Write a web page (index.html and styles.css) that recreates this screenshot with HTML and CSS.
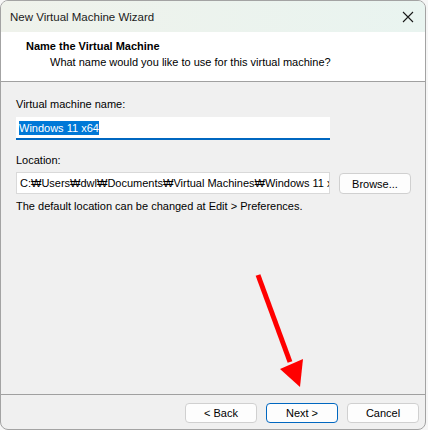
FILE: index.html
```html
<!DOCTYPE html>
<html lang="en">
<head>
  <meta charset="UTF-8" />
  <title>New Virtual Machine Wizard</title>
  <link rel="stylesheet" href="styles.css">
</head>
<body>

  <div class="window">
    <div class="titlebar">
      <span class="title">New Virtual Machine Wizard</span>
      <svg class="close" width="12" height="12" viewBox="0 0 12 12">
        <path d="M1 1 L11 11 M11 1 L1 11" stroke="#1a1a1a" stroke-width="1.1" fill="none"/>
      </svg>
    </div>

    <div class="header">
      <div class="heading">Name the Virtual Machine</div>
      <div class="subheading">What name would you like to use for this virtual machine?</div>
    </div>

    <div class="content">
      <label class="field-label">Virtual machine name:</label>
      <div class="textbox focused"><span class="selected">Windows 11 x64</span></div>

      <label class="field-label location-label">Location:</label>
      <div class="row">
        <div class="textbox path">C:&#8361;Users&#8361;dwl&#8361;Documents&#8361;Virtual Machines&#8361;Windows 11 x64</div>
        <button class="btn browse">Browse...</button>
      </div>
      <p class="hint">The default location can be changed at Edit &gt; Preferences.</p>
    </div>

    <div class="footer">
      <button class="btn">&lt; Back</button>
      <button class="btn default">Next &gt;</button>
      <button class="btn">Cancel</button>
    </div>

    <!-- red pointer drawn over the dialog -->
    <svg class="pointer" width="428" height="430" viewBox="0 0 428 430">
      <line x1="258" y1="275" x2="290" y2="362" stroke="#ff0000" stroke-width="5"/>
      <polygon points="280,369 303,359 300,387" fill="#ff0000"/>
    </svg>
  </div>

</body>
</html>
```

FILE: styles.css
```css
body {
  margin: 0;
  padding: 0;
  background: #f6f6f6;
  font-family: 'Liberation Sans', Arial, sans-serif;
  font-size: 11px;
  color: #000;
}

.window {
  position: relative;
  width: 424px;
  height: 428px;
  border: 1px solid #a3a3a3;
  border-radius: 8px;
  overflow: hidden;
  background: #f0f0f0;
  display: flex;
  flex-direction: column;
}

.titlebar {
  height: 31px;
  background: linear-gradient(to right, #eff2eb, #e9f4f0);
  display: flex;
  align-items: center;
  justify-content: space-between;
  padding: 0 10px 0 9px;
  flex-shrink: 0;
}

.title {
  font-size: 11.5px;
  color: #1b1b1b;
}

.close {
  margin-right: 1px;
}

.header {
  height: 50px;
  background: #fff;
  border-bottom: 1px solid #a0a0a0;
  padding: 6px 0 0 25px;
  box-sizing: border-box;
  flex-shrink: 0;
}

.heading {
  font-weight: bold;
  line-height: 16px;
}

.subheading {
  padding-left: 24px;
  line-height: 16px;
}

.content {
  flex: 1;
  padding: 14px 14px 0 15px;
  display: flex;
  flex-direction: column;
}

.field-label {
  line-height: 16px;
}

.location-label {
  margin-top: 12px;
}

.textbox {
  box-sizing: border-box;
  width: 314px;
  height: 23px;
  margin-top: 5px;
  background: #fff;
  border: 1px solid #d9d9d9;
  padding: 2px 3px;
  line-height: 17px;
  white-space: nowrap;
  overflow: hidden;
}

.textbox.focused {
  border: none;
  border-bottom: 2px solid #0067c0;
  padding-top: 3px;
}

.selected {
  background: #0078d7;
  color: #fff;
  padding: 1px 0;
}

.row {
  display: flex;
  align-items: flex-start;
  gap: 9px;
}

.path {
  height: 22px;
  margin-top: 4px;
  flex-shrink: 0;
}

.btn {
  font-family: inherit;
  font-size: 11px;
  color: #000;
  background: #fdfdfd;
  border: 1px solid #d0d0d0;
  border-radius: 4px;
  height: 20px;
  width: 72px;
  padding: 0;
  cursor: pointer;
  flex-shrink: 0;
}

.browse {
  margin-top: 5px;
  height: 21px;
}

.hint {
  margin: 4px 0 0;
  line-height: 16px;
}

.footer {
  height: 35px;
  border-top: 1px solid #a0a0a0;
  display: flex;
  justify-content: flex-end;
  align-items: flex-start;
  gap: 9px;
  padding: 8px 6px 0 0;
  box-sizing: border-box;
  flex-shrink: 0;
}

.btn.default {
  border-color: #0067c0;
}

.pointer {
  position: absolute;
  left: -1px;
  top: -1px;
  pointer-events: none;
}
```
